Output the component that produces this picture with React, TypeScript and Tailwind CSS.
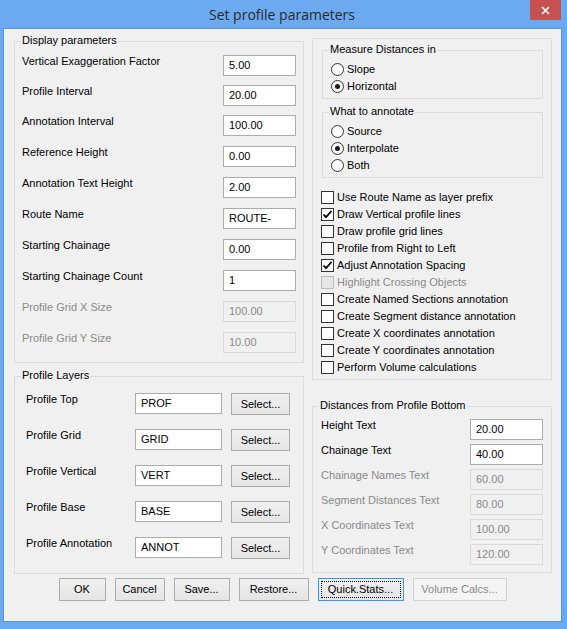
import type { ReactNode } from 'react'

const FONT = "font-['Liberation_Sans',Arial,sans-serif]"

const DISPLAY_ROWS = [
  { label: 'Vertical Exaggeration Factor', value: '5.00', gap: '' },
  { label: 'Profile Interval', value: '20.00', gap: 'mt-[9px]' },
  { label: 'Annotation Interval', value: '100.00', gap: 'mt-[9px]' },
  { label: 'Reference Height', value: '0.00', gap: 'mt-[10px]' },
  { label: 'Annotation Text Height', value: '2.00', gap: 'mt-[10px]' },
  { label: 'Route Name', value: 'ROUTE-', gap: 'mt-[10px]' },
  { label: 'Starting Chainage', value: '0.00', gap: 'mt-[10px]' },
  { label: 'Starting Chainage Count', value: '1', gap: 'mt-[10px]' },
  { label: 'Profile Grid X Size', value: '100.00', gap: 'mt-[10px]', disabled: true },
  { label: 'Profile Grid Y Size', value: '10.00', gap: 'mt-[10px]', disabled: true },
]

const LAYERS = [
  { label: 'Profile Top', value: 'PROF' },
  { label: 'Profile Grid', value: 'GRID' },
  { label: 'Profile Vertical', value: 'VERT' },
  { label: 'Profile Base', value: 'BASE' },
  { label: 'Profile Annotation', value: 'ANNOT' },
]

const OPTIONS = [
  { label: 'Use Route Name as layer prefix' },
  { label: 'Draw Vertical profile lines', checked: true },
  { label: 'Draw profile grid lines' },
  { label: 'Profile from Right to Left' },
  { label: 'Adjust Annotation Spacing', checked: true },
  { label: 'Highlight Crossing Objects', disabled: true },
  { label: 'Create Named Sections annotation' },
  { label: 'Create Segment distance annotation' },
  { label: 'Create X coordinates annotation' },
  { label: 'Create Y coordinates annotation' },
  { label: 'Perform Volume calculations' },
]

const DISTANCES = [
  { label: 'Height Text', value: '20.00' },
  { label: 'Chainage Text', value: '40.00' },
  { label: 'Chainage Names Text', value: '60.00', disabled: true },
  { label: 'Segment Distances Text', value: '80.00', disabled: true },
  { label: 'X Coordinates Text', value: '100.00', disabled: true },
  { label: 'Y Coordinates Text', value: '120.00', disabled: true },
]

function GroupBox({ title, className, children }: { title?: string; className: string; children: ReactNode }) {
  return (
    <div className={`relative border border-[#dcdcdc] ${className}`}>
      {title && (
        <span className="absolute -top-[8px] left-[6px] bg-[#f0f0f0] px-px leading-[13px] text-black">{title}</span>
      )}
      {children}
    </div>
  )
}

function TextBox({ value, disabled, className }: { value: string; disabled?: boolean; className: string }) {
  return (
    <div
      className={`flex h-[21px] items-center border pl-[5px] leading-[13px] ${className} ${
        disabled ? 'border-[#d9d9d9] bg-[#f0f0f0] text-[#8a8a8a]' : 'border-[#acacac] bg-white text-black'
      }`}
    >
      {value}
    </div>
  )
}

function Button({ label, className, focused, disabled }: { label: string; className: string; focused?: boolean; disabled?: boolean }) {
  let tone = 'border-[#acacac] bg-gradient-to-b from-[#f0f0f0] to-[#e5e5e5] text-black'
  if (focused) tone = 'border-[#3399ff] bg-gradient-to-b from-[#f0f0f0] to-[#e5e5e5] text-black'
  if (disabled) tone = 'border-[#d0d0d0] bg-[#f4f4f4] text-[#8a8a8a]'
  return (
    <div className={`relative flex items-center justify-center border leading-[13px] ${tone} ${className}`}>
      {focused && <span className="absolute inset-[2px] border border-dotted border-black" />}
      <span className="relative">{label}</span>
    </div>
  )
}

function Radio({ label, checked }: { label: string; checked?: boolean }) {
  return (
    <div className="flex h-[17px] items-center gap-[3px]">
      <span className="flex h-[13px] w-[13px] items-center justify-center rounded-full border border-[#333] bg-white">
        {checked && <span className="h-[5px] w-[5px] rounded-full bg-[#1a1a1a]" />}
      </span>
      <span className="leading-[13px]">{label}</span>
    </div>
  )
}

function Check({ label, checked, disabled }: { label: string; checked?: boolean; disabled?: boolean }) {
  return (
    <div className="flex h-[17px] items-center gap-[3px]">
      <span
        className={`flex h-[13px] w-[13px] items-center justify-center border ${
          disabled ? 'border-[#bcbcbc] bg-[#e6e6e6]' : 'border-[#333] bg-white'
        }`}
      >
        {checked && (
          <svg width="11" height="11" viewBox="0 0 11 11">
            <polyline points="1.5,5.5 4,8.2 9.5,2" fill="none" stroke="#000" strokeWidth="1.8" />
          </svg>
        )}
      </span>
      <span className={`leading-[13px] ${disabled ? 'text-[#8a8a8a]' : 'text-black'}`}>{label}</span>
    </div>
  )
}

export default function App() {
  return (
    <div className={`flex h-[629px] w-[567px] flex-col bg-[#6ba9f0] text-[11px] ${FONT}`}>
      {/* title bar */}
      <div className="relative flex h-[29px] items-center justify-center pr-[3px]">
        <span className="font-['Open_Sans',sans-serif] text-[14px] leading-[20px] text-[#2b2b2b]">Set profile parameters</span>
        <div className="absolute right-[6px] top-0 flex h-[20px] w-[31px] items-center justify-center bg-[#c75050]">
          <svg width="9" height="9" viewBox="0 0 9 9">
            <path d="M1 1 L8 8 M8 1 L1 8" stroke="#fff" strokeWidth="1.6" />
          </svg>
        </div>
      </div>

      {/* client area */}
      <div className="ml-[4px] flex h-[592px] w-[557px] flex-col bg-[#f0f0f0] pl-[10px] pt-[9px] shadow-[0_0_0_1px_#5d95d6]">
        <div className="flex items-start gap-[8px]">
          {/* left column */}
          <div className="mt-[3px] flex w-[290px] flex-col">
            <GroupBox title="Display parameters" className="pb-[9px] pl-[7px] pr-[7px] pt-[13px]">
              {DISPLAY_ROWS.map((r) => (
                <div key={r.label} className={`flex items-start justify-between ${r.gap}`}>
                  <span className={`leading-[13px] ${r.disabled ? 'text-[#8a8a8a]' : 'text-black'}`}>{r.label}</span>
                  <TextBox value={r.value} disabled={r.disabled} className="w-[73px]" />
                </div>
              ))}
            </GroupBox>

            <GroupBox title="Profile Layers" className="mt-[13px] flex flex-col gap-[14px] pb-[14px] pl-[11px] pt-[16px]">
              {LAYERS.map((l) => (
                <div key={l.label} className="flex items-start">
                  <span className="w-[109px] leading-[13px] text-black">{l.label}</span>
                  <TextBox value={l.value} className="w-[87px]" />
                  <Button label="Select..." className="ml-[9px] h-[22px] w-[59px]" />
                </div>
              ))}
            </GroupBox>
          </div>

          {/* right column */}
          <div className="flex w-[240px] flex-col">
            <GroupBox className="pb-[3px] pl-[9px] pr-[8px] pt-[11px]">
              <GroupBox title="Measure Distances in" className="pb-[3px] pl-[8px] pt-[10px]">
                <Radio label="Slope" />
                <Radio label="Horizontal" checked />
              </GroupBox>
              <GroupBox title="What to annotate" className="mt-[13px] pb-[3px] pl-[8px] pt-[10px]">
                <Radio label="Source" />
                <Radio label="Interpolate" checked />
                <Radio label="Both" />
              </GroupBox>
              <div className="-ml-px mt-[11px] flex flex-col">
                {OPTIONS.map((o) => (
                  <Check key={o.label} label={o.label} checked={o.checked} disabled={o.disabled} />
                ))}
              </div>
            </GroupBox>

            <GroupBox title="Distances from Profile Bottom" className="mt-[26px] flex flex-col gap-[4px] pb-[7px] pl-[8px] pr-[8px] pt-[12px]">
              {DISTANCES.map((d) => (
                <div key={d.label} className="flex items-start justify-between">
                  <span className={`leading-[13px] ${d.disabled ? 'text-[#8a8a8a]' : 'text-black'}`}>{d.label}</span>
                  <TextBox value={d.value} disabled={d.disabled} className="w-[73px]" />
                </div>
              ))}
            </GroupBox>
          </div>
        </div>

        {/* dialog buttons */}
        <div className="-ml-[10px] mt-[4px] flex justify-center gap-[9px]">
          <Button label="OK" className="h-[23px] w-[47px]" />
          <Button label="Cancel" className="h-[23px] w-[50px]" />
          <Button label="Save..." className="h-[23px] w-[56px]" />
          <Button label="Restore..." className="h-[23px] w-[70px]" />
          <Button label="Quick.Stats..." className="h-[23px] w-[86px]" focused />
          <Button label="Volume Calcs..." className="h-[23px] w-[94px]" disabled />
        </div>
      </div>
    </div>
  )
}
